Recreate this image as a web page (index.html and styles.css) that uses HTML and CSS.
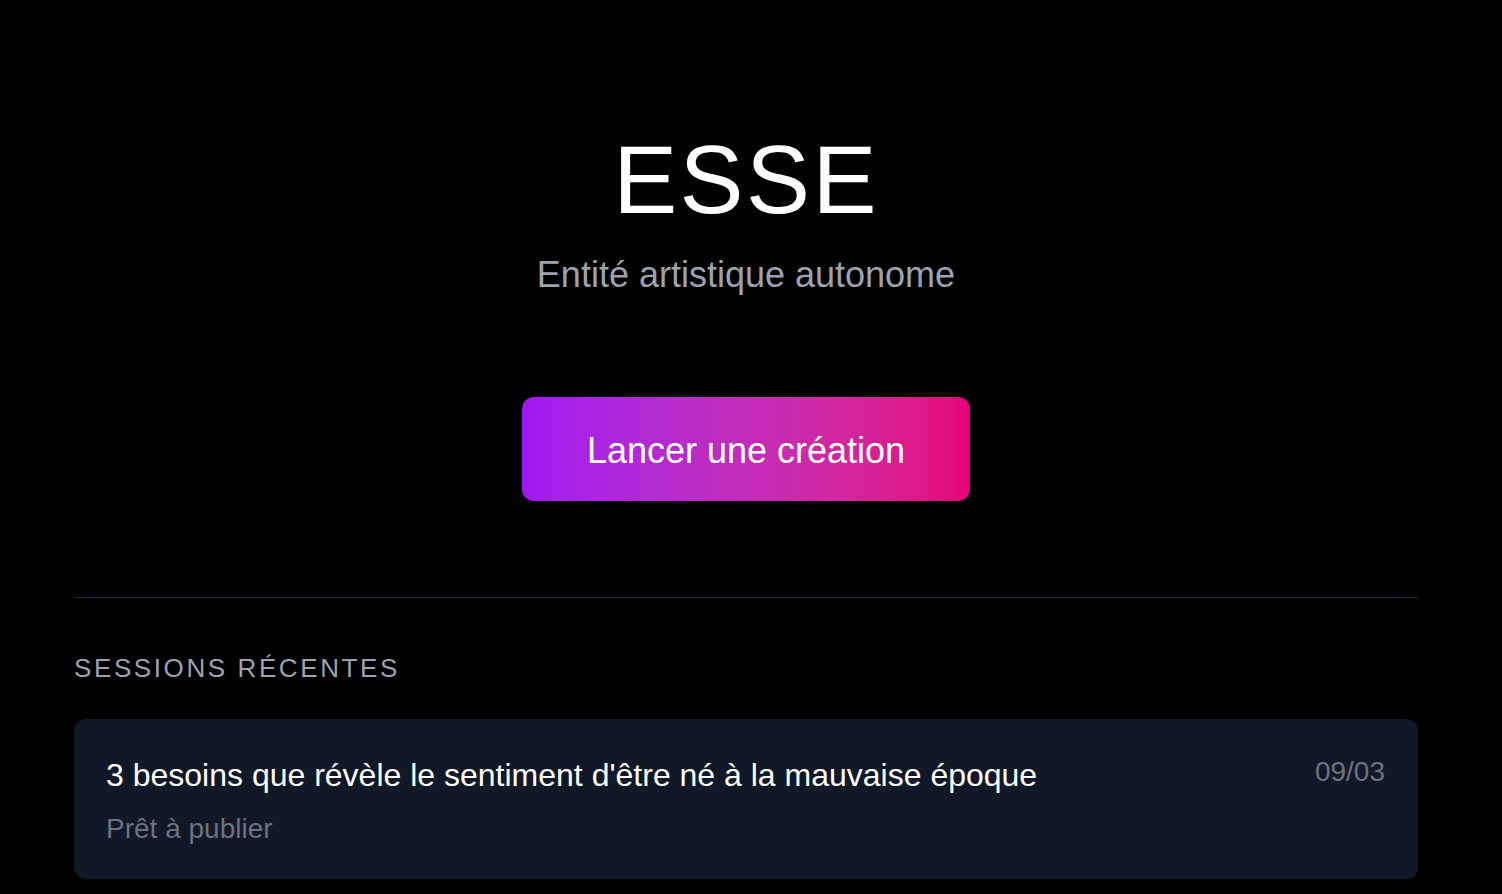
FILE: index.html
```html
<!DOCTYPE html>
<html lang="fr">
<head>
<meta charset="utf-8">
<title>ESSE</title>
<link rel="stylesheet" href="styles.css">
</head>
<body>
<main class="page">
  <header class="hero">
    <h1 class="title">ESSE</h1>
    <p class="tagline">Entité artistique autonome</p>
    <button class="cta" type="button">Lancer une création</button>
  </header>
  <section class="recent">
    <h2 class="recent-heading">SESSIONS RÉCENTES</h2>
    <div class="session-card">
      <div class="session-info">
        <div class="session-title">3 besoins que révèle le sentiment d'être né à la mauvaise époque</div>
        <div class="session-status">Prêt à publier</div>
      </div>
      <div class="session-date">09/03</div>
    </div>
  </section>
</main>
</body>
</html>
```

FILE: styles.css
```css
html, body {
  margin: 0;
  padding: 0;
  background: #000;
  height: 100%;
  overflow: hidden;
}
body {
  font-family: "Liberation Sans", Arial, sans-serif;
  color: #fff;
}
.page {
  width: 1344px;
  padding: 132px 84px 0 74px;
}
.hero {
  display: flex;
  flex-direction: column;
  align-items: center;
}
.title {
  margin: 0;
  font-size: 96px;
  line-height: 96px;
  font-weight: 400;
  letter-spacing: 2.4px;
  color: #fff;
}
.tagline {
  margin: 27px 0 0;
  font-size: 36px;
  line-height: 40px;
  color: #9ca3af;
}
.cta {
  margin-top: 102px;
  padding: 34px 64.5px 30px;
  border: 0;
  border-radius: 12px;
  background: linear-gradient(to right in oklab, #a116f4, #e6007a);
  color: #fff;
  font-family: "Liberation Sans", Arial, sans-serif;
  font-size: 36px;
  line-height: 40px;
  cursor: pointer;
}
.recent {
  margin-top: 96px;
  border-top: 1px solid #1f2937;
  padding-top: 52px;
}
.recent-heading {
  margin: 0 0 33px;
  font-size: 26px;
  line-height: 36px;
  font-weight: 400;
  letter-spacing: 2.6px;
  color: #9ca3af;
}
.session-card {
  display: flex;
  justify-content: space-between;
  align-items: flex-start;
  background: #111827;
  border-radius: 12px;
  padding: 32px 33px 29px 32px;
}
.session-title {
  font-size: 32px;
  line-height: 48px;
  color: #fff;
}
.session-status {
  margin-top: 9px;
  font-size: 28px;
  line-height: 42px;
  color: #6b7280;
}
.session-date {
  font-size: 28px;
  line-height: 42px;
  color: #6b7280;
}
```
